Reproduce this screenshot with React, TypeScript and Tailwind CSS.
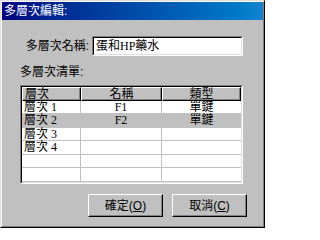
const rows = [
  { level: '層次 1', name: 'F1', type: '單鍵', h: 'h-[13px]' },
  { level: '層次 2', name: 'F2', type: '單鍵', h: 'h-[14px]', selected: true },
  { level: '層次 3', name: '', type: '', h: 'h-[13px]' },
  { level: '層次 4', name: '', type: '', h: 'h-[14px]' },
  { level: '', name: '', type: '', h: 'h-[13px]' },
  { level: '', name: '', type: '', h: 'h-[14px]' },
];

const font = "font-['Liberation_Serif','Noto_Sans_CJK_TC',serif]";
const sans = "font-['Liberation_Sans','Noto_Sans_CJK_TC',sans-serif]";

function Button({ label, hot }: { label: string; hot: string }) {
  return (
    <button
      className={`w-[75px] h-[23px] bg-[#c0c0c0] border-t border-l border-white border-r border-b border-r-black border-b-black shadow-[inset_-1px_-1px_#808080] text-[12px] leading-[14px] text-black flex items-center justify-center ${sans}`}
    >
      {label}(<span className="underline">{hot}</span>)
    </button>
  );
}

export default function App() {
  return (
    <div className="w-[265px] h-[228px] bg-[#c0c0c0] border-t border-l border-[#dfdfdf] border-r border-b border-r-black border-b-black">
      <div className="h-full flex flex-col border-t border-l border-white border-r border-b border-r-[#808080] border-b-[#808080]">
        {/* title bar */}
        <div className={`h-[18px] bg-gradient-to-r from-[#000080] to-[#1084d0] text-white text-[12px] leading-[18px] pl-[2px] ${sans}`}>
          多層次編輯:
        </div>

        {/* name row */}
        <div className="flex items-center mt-[16px] pl-[18px]">
          <span className={`w-[72px] text-right pr-[3px] text-[12px] leading-[14px] text-black ${sans}`}>多層次名稱:</span>
          <div className="w-[151px] h-[20px] bg-white border-t border-l border-[#808080] border-r border-b border-r-white border-b-white">
            <div className={`h-full border-t border-l border-black border-r border-b border-r-[#dfdfdf] border-b-[#dfdfdf] pl-[2px] text-[12px] leading-[16px] text-black ${font}`}>
              蛋和HP藥水
            </div>
          </div>
        </div>

        {/* list label */}
        <div className={`mt-[9px] pl-[18px] text-[12px] leading-[14px] text-black ${sans}`}>多層次清單:</div>

        {/* list */}
        <div className="ml-[18px] mt-[6px] w-[223px] h-[99px] border-t border-l border-[#808080] border-r border-b border-r-white border-b-white">
          <div className="h-full bg-white border-t border-l border-black border-r border-b border-r-[#dfdfdf] border-b-[#dfdfdf] overflow-hidden">
            <div className={`flex h-[14px] text-[12px] leading-[12px] text-black ${font}`}>
              <div className="w-[59px] bg-[#c0c0c0] border-t border-l border-white border-r border-b border-r-black border-b-black shadow-[inset_-1px_-1px_#808080] pl-[2px]">層次</div>
              <div className="w-[81px] bg-[#c0c0c0] border-t border-l border-white border-r border-b border-r-black border-b-black shadow-[inset_-1px_-1px_#808080] text-center">名稱</div>
              <div className="w-[79px] bg-[#c0c0c0] border-t border-l border-white border-r border-b border-r-black border-b-black shadow-[inset_-1px_-1px_#808080] text-center">類型</div>
            </div>
            {rows.map((r, i) => (
              <div
                key={i}
                className={`flex ${r.h} text-[12px] leading-[13px] text-black ${font} ${r.selected ? 'bg-[#c0c0c0]' : ''}`}
              >
                <div className="w-[59px] border-r border-b border-[#c0c0c0] pl-[2px]">{r.level}</div>
                <div className="w-[81px] border-r border-b border-[#c0c0c0] text-center">{r.name}</div>
                <div className="w-[79px] border-b border-[#c0c0c0] text-center">{r.type}</div>
              </div>
            ))}
          </div>
        </div>

        {/* buttons */}
        <div className="flex gap-[9px] mt-[10px] pl-[86px]">
          <Button label="確定" hot="O" />
          <Button label="取消" hot="C" />
        </div>
      </div>
    </div>
  );
}
